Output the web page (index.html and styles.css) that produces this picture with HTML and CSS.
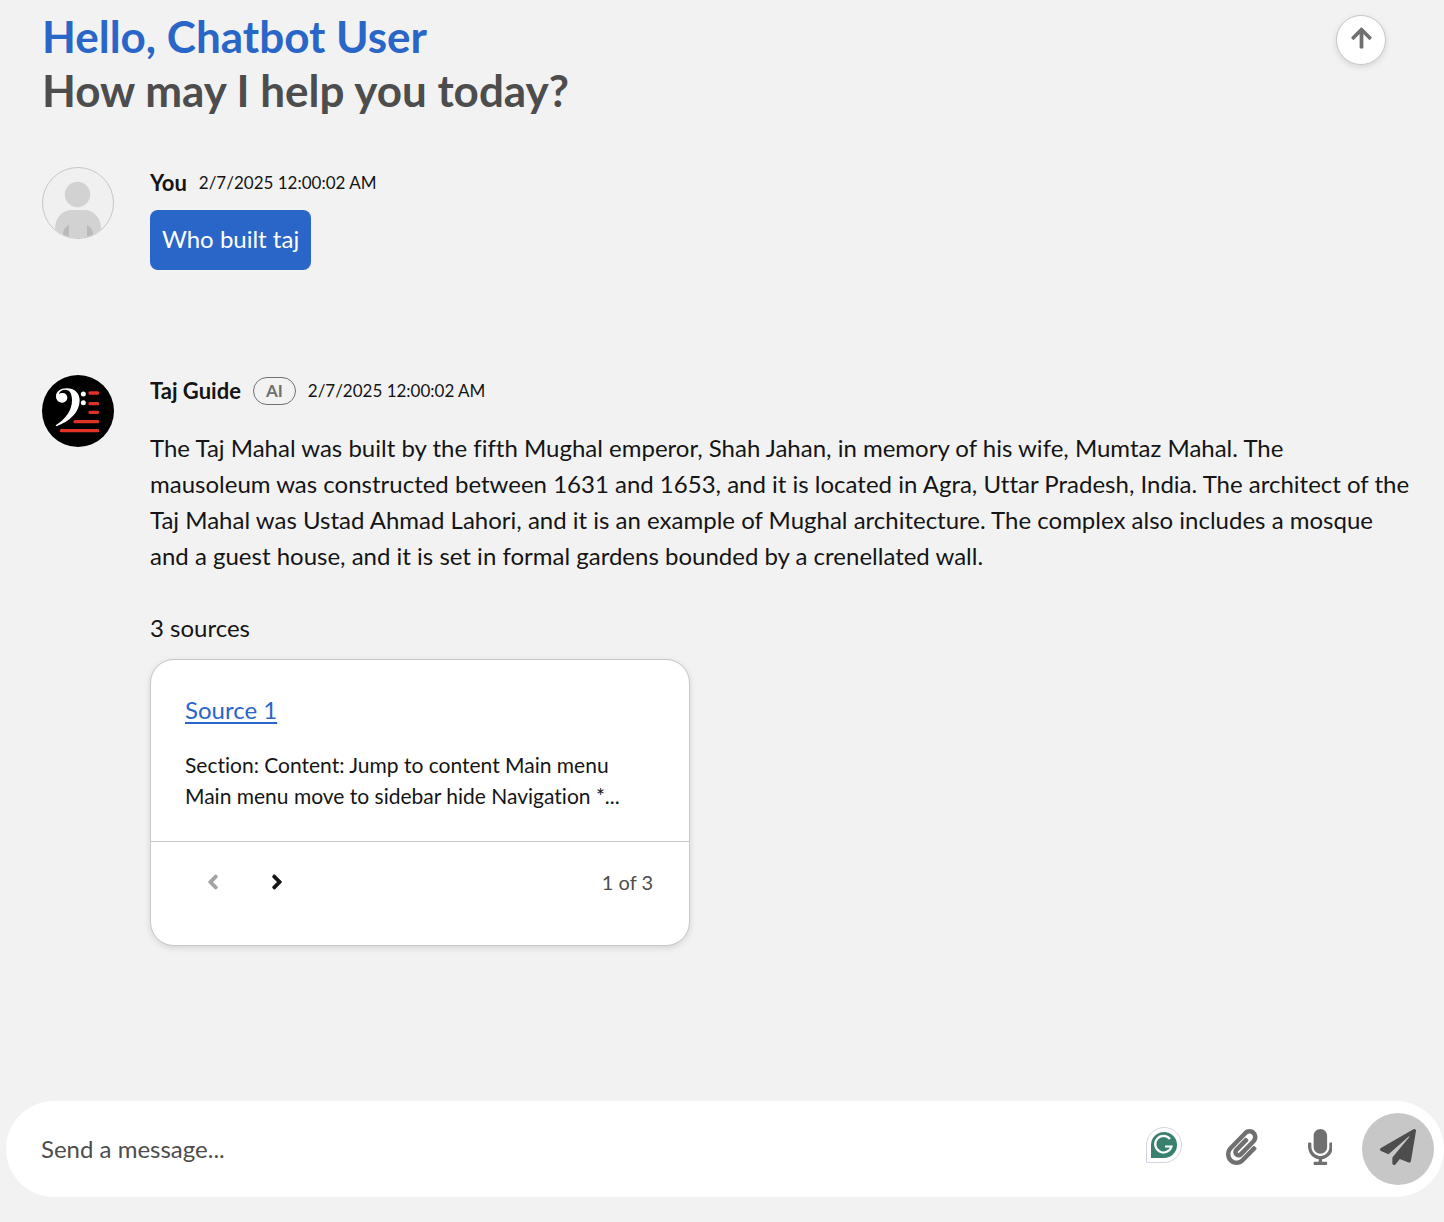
FILE: index.html
```
<!DOCTYPE html>
<html lang="en">
<head>
<meta charset="utf-8">
<meta name="viewport" content="width=device-width, initial-scale=1">
<title>Chatbot</title>
<link rel="stylesheet" href="styles.css">
</head>
<body>
<header class="welcome">
  <h1 class="welcome-title">
    <span class="welcome-hello">Hello, Chatbot User</span>
    <span class="welcome-question">How may I help you today?</span>
  </h1>
  <button class="jump-button" type="button" aria-label="Back to top">
    <svg class="icon-small" viewBox="0 0 448 512" aria-hidden="true"><path d="M34.9 289.500l-22.200-22.200c-9.400-9.400-9.400-24.600 0-33.900L207 39c9.400-9.400 24.600-9.400 33.900 0l194.300 194.300c9.400 9.400 9.400 24.600 0 33.900L413 289.400c-9.500 9.500-25 9.300-34.300-.4L264 168.600V456c0 13.300-10.700 24-24 24h-32c-13.300 0-24-10.700-24-24V168.600L69.200 289.100c-9.300 9.800-24.800 10-34.300.4z"/></svg>
  </button>
</header>

<main class="messages">
  <section class="message">
    <svg class="avatar" viewBox="0 0 72 72" aria-hidden="true">
      <clipPath id="avatar-clip"><circle cx="36" cy="36" r="35"/></clipPath>
      <circle cx="36" cy="36" r="35.500" fill="#f0f0f0" stroke="#c7c7c7"/>
      <g clip-path="url(#avatar-clip)">
        <circle cx="35.500" cy="27.500" r="12.700" fill="#d2d2d2"/>
        <path d="M13 72V62c0-11 7-19 17-19h12c10 0 17 8 17 19v10z" fill="#d2d2d2"/>
        <path d="M27 58c-4 2-6 5-6 9v5h6zM45 58c4 2 6 5 6 9v5h-6z" fill="#b8bbbe"/>
      </g>
    </svg>
    <div class="message-content">
      <div class="message-meta">
        <span class="message-name">You</span>
        <time class="message-time">2/7/2025 12:00:02 AM</time>
      </div>
      <p class="bubble">Who built taj</p>
    </div>
  </section>

  <section class="message">
    <svg class="avatar" viewBox="0 0 216 216" aria-hidden="true">
      <circle cx="108" cy="108" r="108"/>
      <path d="M41 151c30-19 49-44 49-75 0-20-7-32-20-32-10 0-18 5-20 14 3-3 7-4 11-4 9 0 15 6 15 14s-7 15-16 15c-11 0-18-8-18-19 0-14 13-24 32-24 23 0 39 14 39 36 0 37-31 64-70 78z" fill="#fff"/>
      <circle cx="124" cy="57" r="7.500" fill="#fff"/>
      <circle cx="124" cy="83" r="7.500" fill="#fff"/>
      <path d="M144 54h23M144 86h23M144 112h23M99 140h68M58 167h109" stroke="#e03224" stroke-width="10" stroke-linecap="round"/>
    </svg>
    <div class="message-content">
      <div class="message-meta">
        <span class="message-name">Taj Guide</span>
        <span class="badge">AI</span>
        <time class="message-time">2/7/2025 12:00:02 AM</time>
      </div>
      <div class="answer">
        <p class="answer-text">The Taj Mahal was built by the fifth Mughal emperor, Shah Jahan, in memory of his wife, Mumtaz Mahal. The<br> mausoleum was constructed between 1631 and 1653, and it is located in Agra, Uttar Pradesh, India. The architect of the Taj Mahal was Ustad Ahmad Lahori, and it is an example of Mughal architecture. The complex also includes a mosque and a guest house, and it is set in formal gardens bounded by a crenellated wall.</p>
        <div class="sources">
          <p class="sources-count">3 sources</p>
          <article class="source-card">
            <div class="source-body">
              <a class="source-link" href="#source-1">Source 1</a>
              <p class="source-text">Section: Content: Jump to content Main menu Main menu move to sidebar hide Navigation *...</p>
            </div>
            <nav class="source-nav" aria-label="Sources">
              <button class="nav-button" type="button" aria-label="Previous source" disabled>
                <svg class="icon-small" viewBox="0 0 256 512" aria-hidden="true"><path d="M31.700 239l136-136c9.400-9.400 24.600-9.400 33.900 0l22.600 22.600c9.400 9.400 9.400 24.600 0 33.900L127.900 256l96.400 96.400c9.400 9.400 9.400 24.600 0 33.900L201.700 409c-9.400 9.400-24.600 9.400-33.900 0l-136-136c-9.500-9.400-9.500-24.600-.1-34z"/></svg>
              </button>
              <button class="nav-button" type="button" aria-label="Next source">
                <svg class="icon-small" viewBox="0 0 256 512" aria-hidden="true"><path d="M224.300 273l-136 136c-9.400 9.400-24.600 9.400-33.900 0l-22.600-22.600c-9.400-9.400-9.400-24.600 0-33.900l96.400-96.400-96.400-96.400c-9.400-9.400-9.400-24.600 0-33.900L54.300 103c9.400-9.400 24.600-9.400 33.900 0l136 136c9.500 9.400 9.500 24.600.1 34z"/></svg>
              </button>
              <span class="source-page">1 of 3</span>
            </nav>
          </article>
        </div>
      </div>
    </div>
  </section>
</main>

<form class="composer">
  <input class="composer-input" type="text" placeholder="Send a message..." aria-label="Send a message">
  <button class="composer-button composer-grammar" type="button" aria-label="Grammarly">
    <svg class="icon-large" viewBox="0 0 36 36" aria-hidden="true">
      <path d="M.5 35.500V18A17.500 17.500 0 1 1 18 35.500z" fill="#fff" stroke="#d3d4e3"/>
      <path d="M5 31V18A13 13 0 1 1 18 31z" fill="#39806f"/>
      <path d="M24 12A8.300 8.300 0 1 0 25.500 19.500H19M21.500 19.500H26" fill="none" stroke="#fff" stroke-width="2.200"/>
    </svg>
  </button>
  <button class="composer-button" type="button" aria-label="Attach a file">
    <svg class="icon-large" viewBox="0 0 448 512" aria-hidden="true"><path d="M43.246 466.142c-58.430-60.289-57.341-157.511 1.386-217.581L254.392 34c44.316-45.332 116.351-45.336 160.671 0 43.890 44.894 43.943 117.329 0 162.276L232.214 383.128c-29.855 30.537-78.633 30.111-107.982-.998-28.275-29.970-27.368-77.473 1.452-106.953l143.743-146.835c6.182-6.314 16.312-6.422 22.626-.241l22.861 22.379c6.315 6.182 6.422 16.312.241 22.626L171.427 319.927c-4.932 5.045-5.236 13.428-.648 18.292 4.372 4.634 11.245 4.711 15.688.165l182.849-186.851c19.613-20.062 19.613-52.725-.011-72.798-19.189-19.627-49.957-19.637-69.154 0L90.390 293.295c-34.763 35.560-35.299 93.120-1.191 128.313 34.010 35.093 88.985 35.137 123.058.286l172.060-175.999c6.177-6.319 16.307-6.433 22.626-.256l22.877 22.364c6.319 6.177 6.434 16.307.256 22.626l-172.060 175.998c-59.576 60.938-155.943 60.216-214.770-.485z"/></svg>
  </button>
  <button class="composer-button" type="button" aria-label="Use microphone">
    <svg class="icon-large" viewBox="0 0 352 512" aria-hidden="true"><path d="M176 352c53.020 0 96-42.980 96-96V96c0-53.020-42.980-96-96-96S80 42.980 80 96v160c0 53.020 42.980 96 96 96zm160-160h-16c-8.840 0-16 7.160-16 16v48c0 74.800-64.490 134.820-140.790 127.380C96.710 376.890 48 317.110 48 250.300V208c0-8.840-7.160-16-16-16H16c-8.840 0-16 7.160-16 16v40.160c0 89.640 63.970 169.550 152 181.690V464H96c-8.840 0-16 7.160-16 16v16c0 8.840 7.160 16 16 16h160c8.840 0 16-7.160 16-16v-16c0-8.840-7.160-16-16-16h-56v-33.770C285.710 418.470 352 344.900 352 256v-48c0-8.840-7.160-16-16-16z"/></svg>
  </button>
  <button class="composer-button composer-send" type="submit" aria-label="Send">
    <svg class="icon-large" viewBox="0 0 512 512" aria-hidden="true"><path d="M476 3.200L12.500 270.600c-18.100 10.400-15.800 35.600 2.200 43.200L121 358.400l287.300-253.200c5.500-4.900 13.300 2.600 8.600 8.300L176 407v80.500c0 23.600 28.500 32.900 42.500 15.800L282 426l124.600 52.200c14.200 6 30.400-2.900 33-18.200l72-432C515 7.800 493.300-6.800 476 3.200z"/></svg>
  </button>
</form>
</body>
</html>
```
FILE: styles.css
```
* {
  box-sizing: border-box;
}

body {
  display: flex;
  flex-direction: column;
  min-height: 100vh;
  margin: 0;
  background: #f2f2f2;
  color: #151515;
  font-family: Lato, "Open Sans", sans-serif;
  font-size: 24px;
  font-variant-ligatures: none;
  line-height: 36px;
}

h1,
p {
  margin: 0;
}

button {
  display: flex;
  align-items: center;
  justify-content: center;
  padding: 0;
  border: 0;
  background: none;
  color: inherit;
  font: inherit;
}

svg {
  display: block;
  flex: none;
}

.icon-small {
  height: 24px;
  fill: currentColor;
}

.icon-large {
  height: 36px;
  fill: currentColor;
}

.welcome {
  display: flex;
  align-items: flex-start;
  justify-content: space-between;
  padding: 9px 58px 0 42px;
}

.welcome-title {
  font-size: 44px;
  line-height: 54px;
  font-weight: 700;
}

.welcome-hello,
.welcome-question {
  display: block;
}

.welcome-hello {
  color: #2a65c8;
}

.welcome-question {
  color: #4d4d4d;
}

.jump-button {
  width: 50px;
  height: 50px;
  margin-top: 6px;
  padding-bottom: 4px;
  border: 1px solid #c7c7c7;
  border-radius: 50%;
  background: #fff;
  box-shadow: 0 2px 6px rgba(0, 0, 0, 0.12);
  color: #707070;
}

.messages {
  display: flex;
  flex: 1;
  flex-direction: column;
  gap: 105px;
  padding: 50px 32px 48px 42px;
}

.message {
  display: flex;
  align-items: flex-start;
  gap: 36px;
}

.avatar {
  width: 72px;
  height: 72px;
}

.message-content {
  display: flex;
  flex: 1;
  flex-direction: column;
  align-items: flex-start;
  gap: 12px;
  min-width: 0;
}

.message-meta {
  display: flex;
  align-items: center;
  gap: 12px;
  height: 31px;
}

.message-name {
  font-size: 22px;
  font-weight: 700;
}

.message-time {
  font-size: 17px;
}

.badge {
  padding: 0 12px;
  border: 1px solid #707070;
  border-radius: 14px;
  color: #707070;
  font-size: 17px;
  font-weight: 700;
  line-height: 26px;
}

.bubble {
  padding: 11px 12px 13px;
  border-radius: 8px;
  background: #2a65c8;
  color: #fff;
}

.answer {
  display: flex;
  flex-direction: column;
  gap: 36px;
  width: 100%;
  padding-top: 12px;
}

.sources {
  display: flex;
  flex-direction: column;
  gap: 13px;
}

.source-card {
  width: 100%;
  max-width: 540px;
  border: 1px solid #c7c7c7;
  border-radius: 24px;
  background: #fff;
  box-shadow: 0 2px 6px rgba(0, 0, 0, 0.12);
}

.source-body {
  display: flex;
  flex-direction: column;
  align-items: flex-start;
  gap: 21px;
  padding: 32px 34px 30px;
  border-bottom: 1px solid #c7c7c7;
}

.source-link {
  color: #2a65c8;
  text-decoration-thickness: 2px;
  text-underline-offset: 3px;
}

.source-text {
  font-size: 21px;
  line-height: 31px;
}

.source-nav {
  display: flex;
  align-items: center;
  padding: 12px 36px 35px 30px;
}

.nav-button {
  width: 64px;
  height: 56px;
}

.nav-button:disabled {
  color: #a3a3a3;
}

.source-page {
  margin-left: auto;
  color: #4d4d4d;
  font-size: 20px;
}

.composer {
  display: flex;
  align-items: center;
  gap: 6px;
  margin: 0 0 25px 6px;
  padding: 12px 10px 12px 35px;
  border-radius: 48px;
  background: #fff;
}

.composer-input {
  flex: 1;
  min-width: 0;
  height: 36px;
  padding: 0;
  border: 0;
  outline: 0;
  background: none;
  color: #151515;
  font: inherit;
}

.composer-input::placeholder {
  color: #4d4d4d;
  opacity: 1;
}

.composer-button {
  width: 72px;
  height: 72px;
  padding-bottom: 4px;
  border-radius: 50%;
  color: #707070;
}

.composer-grammar {
  padding-bottom: 8px;
}

.composer-send {
  background: #c7c7c7;
  color: #4d4d4d;
}
```
